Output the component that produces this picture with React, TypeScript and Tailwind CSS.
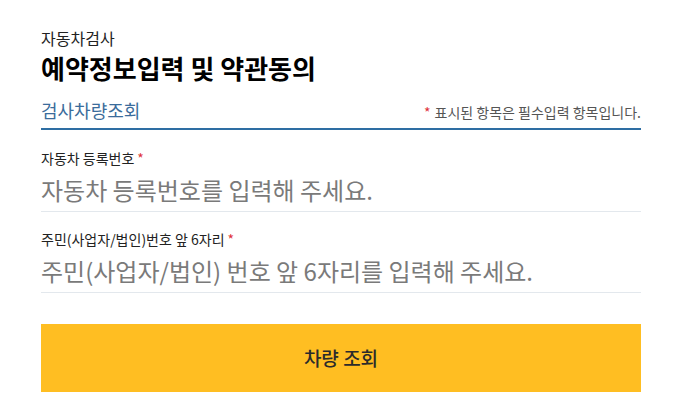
import React from "react";

const font = {
  fontFamily: '"Noto Sans CJK KR", "Noto Sans", sans-serif',
};

function Field({ label, placeholder }: { label: string; placeholder: string }) {
  return (
    <div className="flex flex-col">
      <label className="text-[14px] leading-[18px] text-[#222]">
        {label}
        <span className="ml-[3px] text-[#e0323a]">*</span>
      </label>
      <input
        type="text"
        placeholder={placeholder}
        className="h-[45px] w-full border-b border-[#e3e8ed] bg-transparent text-[24px] text-[#333] outline-none placeholder:text-[#7a7a7a]"
      />
    </div>
  );
}

export default function App() {
  return (
    <div className="min-h-[415px] w-full bg-white" style={font}>
      <div className="mx-[41px] pt-[27px]">
        <p className="text-[16px] leading-[22px] text-[#222]">자동차검사</p>
        <h1 className="text-[26px] font-bold leading-[38px] text-black">
          예약정보입력 및 약관동의
        </h1>

        <div className="mt-[11px] flex items-end justify-between border-b-2 border-[#2e6ea3] pb-[6px]">
          <h2 className="text-[18px] leading-[24px] text-[#3b6c9b]">검사차량조회</h2>
          <p className="text-[14px] leading-[20px] text-[#555]">
            <span className="mr-[4px] text-[#e0323a]">*</span>표시된 항목은 필수입력 항목입니다.
          </p>
        </div>

        <div className="mt-[19px] flex flex-col gap-[18px]">
          <Field label="자동차 등록번호" placeholder="자동차 등록번호를 입력해 주세요." />
          <Field label="주민(사업자/법인)번호 앞 6자리" placeholder="주민(사업자/법인) 번호 앞 6자리를 입력해 주세요." />
        </div>

        <button
          type="button"
          className="mt-[31px] flex h-[68px] w-full items-center justify-center bg-[#ffbe22] text-[19px] font-medium text-[#2b2b2b]"
        >
          차량 조회
        </button>
      </div>
    </div>
  );
}
